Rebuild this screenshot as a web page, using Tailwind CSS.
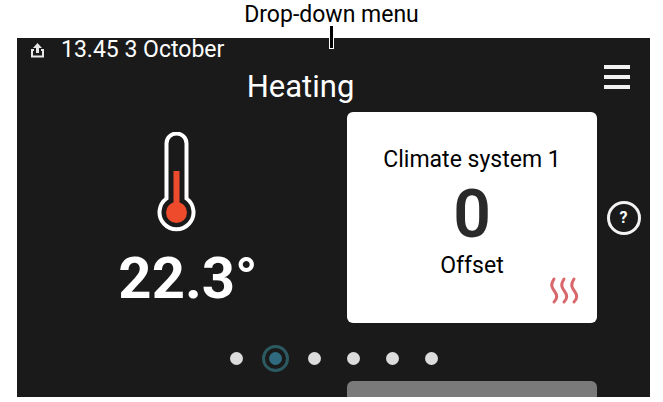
<!DOCTYPE html>
<html lang="en">
  <head>
    <meta charset="utf-8" />
    <meta content="width=device-width, initial-scale=1.0" name="viewport" />
    <title>Heating</title>
    <script src="https://cdn.jsdelivr.net/npm/@tailwindcss/browser@4"></script>
  </head>
  <body class="bg-white font-['Roboto',sans-serif] text-[23px] leading-7">
    <div class="relative pt-[38px] pl-[17px] pr-[13px]">
      <!-- Callout -->
      <div class="absolute inset-x-0 top-0 flex flex-col items-center pt-px">
        <p class="text-black">Drop-down menu</p>
        <div class="-mt-1 h-6 w-[5px] border border-white bg-black"></div>
      </div>

      <main class="bg-[#1a1a1a] text-white">
        <!-- Status bar -->
        <div class="flex h-6 items-center gap-4 pl-3">
          <svg class="h-4 w-4" viewBox="0 0 16 16" fill="none" stroke="#e8e8e8" stroke-width="2">
            <path d="M5 8H3v6.500h11V8h-2" />
            <path d="M8.500 11V5" stroke-width="3" />
            <path d="M4 6 8.500 1 13 6z" fill="#e8e8e8" stroke="none" />
          </svg>
          <p>13.45 3 October</p>
        </div>

        <!-- Title and menu button -->
        <header class="flex h-[50px] items-center">
          <h1 class="flex-1 text-center text-[31px]">Heating</h1>
          <button type="button" aria-label="Menu" class="flex w-[66px] justify-center pb-5">
            <svg class="h-7 w-7" viewBox="0 0 28 28" stroke="#f2f2f2" stroke-width="4">
              <path d="M1 4h26M1 14h26M1 24h26" />
            </svg>
          </button>
        </header>

        <section class="flex h-[211px]">
          <div class="flex flex-1 flex-col items-center pt-5">
            <svg class="mr-3 h-[100px] w-10" viewBox="0 0 40 100" fill="none">
              <path
                d="M10.500 66.500V11.500a10 10 0 0 1 20 0V66.500a17 17 0 1 1-20 0z"
                stroke="#fff"
                stroke-width="4"
              />
              <path d="M20.500 39v42" stroke="#ee4a2c" stroke-width="6" />
              <circle cx="20.500" cy="80.500" r="10.500" fill="#ee4a2c" />
            </svg>
            <p class="ml-3 pt-4 text-[58px] leading-[60px] font-bold">22.3°</p>
          </div>

          <div class="relative flex w-[250px] flex-col items-center rounded-md bg-white pt-[34px] text-black">
            <h2>Climate system 1</h2>
            <p class="pt-[10px] pb-[6px] text-[66px] leading-[62px] font-semibold text-[#2a2a2a]">0</p>
            <p>Offset</p>
            <svg
              class="absolute right-4 bottom-4 h-8 w-8"
              viewBox="0 0 32 32"
              fill="none"
              stroke="#d9686c"
              stroke-width="3"
              stroke-linecap="round"
            >
              <path d="M5 4C1 10 3 13 6 17s2 7-1 10" />
              <path d="M15 4c-4 6-2 9 1 13s2 7-1 10" />
              <path d="M25 4c-4 6-2 9 1 13s2 7-1 10" />
            </svg>
          </div>

          <div class="flex w-[53px] items-center justify-center">
            <button
              type="button"
              aria-label="Help"
              class="flex h-[34px] w-[34px] items-center justify-center rounded-full border-3 border-[#f2f2f2] text-base font-bold"
            >
              ?
            </button>
          </div>
        </section>

        <!-- Page dots -->
        <nav aria-label="Pages" class="flex h-[58px] items-center justify-center gap-[26px] pt-3">
          <a href="#page1" aria-label="Page 1" class="h-[13px] w-[13px] rounded-full bg-[#dcdcdc]"></a>
          <a
            href="#page2"
            aria-label="Page 2"
            aria-current="page"
            class="h-[13px] w-[13px] rounded-full bg-[#2f6a7e] outline-3 outline-offset-4 outline-[#2c5a62]"
          ></a>
          <a href="#page3" aria-label="Page 3" class="h-[13px] w-[13px] rounded-full bg-[#dcdcdc]"></a>
          <a href="#page4" aria-label="Page 4" class="h-[13px] w-[13px] rounded-full bg-[#dcdcdc]"></a>
          <a href="#page5" aria-label="Page 5" class="h-[13px] w-[13px] rounded-full bg-[#dcdcdc]"></a>
          <a href="#page6" aria-label="Page 6" class="h-[13px] w-[13px] rounded-full bg-[#dcdcdc]"></a>
        </nav>

        <!-- Top of the next card -->
        <div class="flex justify-end pr-[53px]">
          <div class="h-4 w-[250px] rounded-t-md bg-[#7a7a7a]"></div>
        </div>
      </main>
    </div>
  </body>
</html>
